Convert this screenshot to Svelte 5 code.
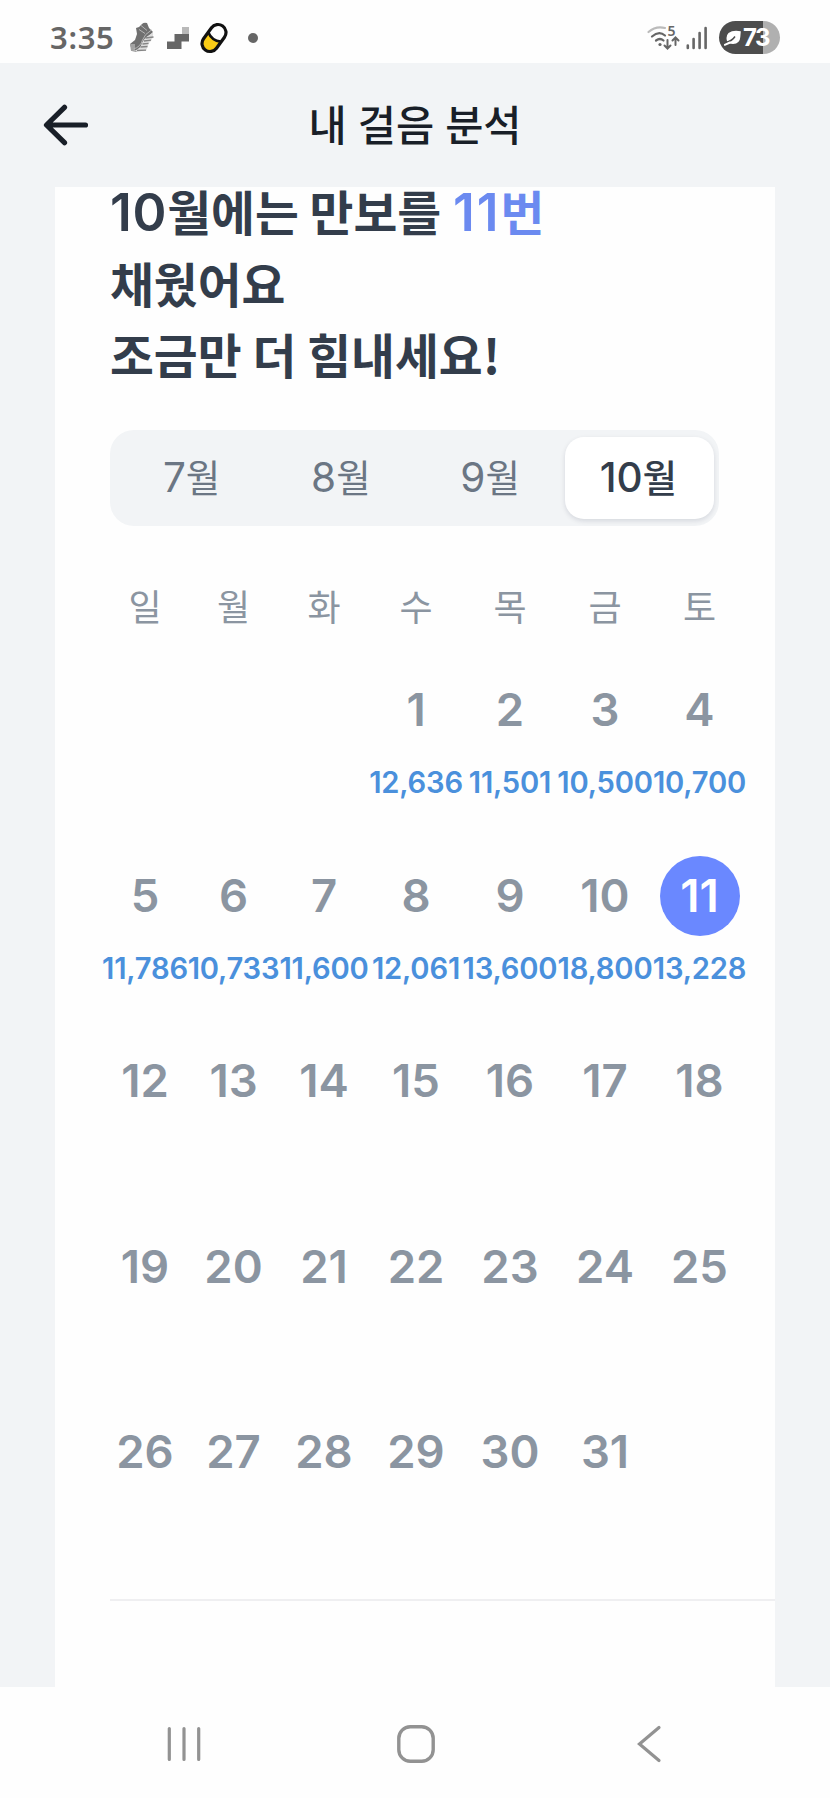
<script>
	const months = [7, 8, 9, 10];
	const weekdays = ['일', '월', '화', '수', '목', '금', '토'];
	const today = 11;
	const startOffset = 3; // 1일은 수요일

	const steps = {
		1: 12636, 2: 11501, 3: 10500, 4: 10700,
		5: 11786, 6: 10733, 7: 11600, 8: 12061, 9: 13600, 10: 18800, 11: 13228
	};

	const cells = [
		...Array(startOffset).fill(null),
		...Array.from({ length: 31 }, (_, i) => i + 1)
	];

	let selected = $state(10);
</script>

<div class="screen">
	<div class="status">
		<div class="status-left">
			<span class="clock">3:35</span>
			<svg class="shoe" width="24" height="31" viewBox="0 0 24 31" aria-hidden="true">
				<path d="M12 2q2-2 5-1l2 5 4 4-3 3-5 4-4 8-5 5-4-1-2-7 5-4 2-6-1-6 3-1z" fill="#707070" />
				<path d="M0 22h5v7H1z" fill="#a2a2a2" />
				<path d="M23 10.500q1 6-4 10.500l-3 8-14 .500q7-2 9-6 2-6 6-9z" fill="#dedede" />
				<path d="M15.500 16l8-1M14 19l7-.800M12.500 22l6-.600M10.500 25l7-.500M7 28.500l9-.300" stroke="#858585" stroke-width="1.300" />
				<path d="M21.500 8q-7 4-9 10-2 7-9 9M11 3.500l6 5M9 7.500l6 4" fill="none" stroke="#b5b5b5" stroke-width="1" />
			</svg>
			<svg class="stairs" width="22" height="22" viewBox="0 0 22 22" aria-hidden="true">
				<path d="M15 0h7v7h-7z" fill="#b9b9b9" />
				<path d="M7.500 7H22v7.500h-7.500V22H0v-7.500h7.500z" fill="#666" />
			</svg>
			<svg class="pill" width="28" height="32" viewBox="0 0 28 32" aria-hidden="true">
				<g transform="rotate(36 14 16)">
					<path d="M6.500 15q7.500 4.500 15 0v7a7.500 7.500 0 0 1-15 0z" fill="#facc15" />
					<rect x="6" y="1.200" width="16" height="29.600" rx="8" fill="none" stroke="#111" stroke-width="3.200" />
					<path d="M6.500 15q7.500 4.500 15 0" fill="none" stroke="#111" stroke-width="2.600" />
				</g>
			</svg>
			<span class="dot"></span>
		</div>
		<div class="status-right">
			<svg class="wifi" width="33" height="26" viewBox="0 0 33 26" fill="none" stroke-linecap="round" aria-hidden="true">
				<path d="M1.500 7Q9 .500 18 3" stroke="#bbb" stroke-width="2.200" />
				<path d="M5 11.500Q12 5.500 18 10.500" stroke="#666" stroke-width="2.200" />
				<path d="M9 15.500Q13 12.500 16.500 15.500" stroke="#666" stroke-width="2.200" />
				<circle cx="13" cy="19.500" r="1.600" fill="#666" />
				<path d="M20.500 15v8M17.500 20.500l3 3 3-3M28.500 20v-7M25.500 15.500l3-3 3 3" stroke="#666" stroke-width="2" />
				<text x="20.500" y="11" class="band">5</text>
			</svg>
			<svg class="signal" width="22" height="24" viewBox="0 0 22 24" aria-hidden="true">
				<path d="M1.800 19.500v2.500M7.600 13v9M13.600 7v15M19.600 2v20" stroke="#666" stroke-width="2.600" stroke-linecap="round" />
			</svg>
			<div class="battery">
				<svg width="18" height="16" viewBox="0 0 18 16" aria-hidden="true">
					<path d="M16.800 1.200Q9-.500 4.500 3 1.500 6 3 11q1.500 3 6 3 7-.500 7.300-7z" fill="#fff" />
					<path d="M2 12.500Q8 11 11 6.500" fill="none" stroke="#4d4d4d" stroke-width="1.500" />
					<path d="M.800 14.800L6 12.500" stroke="#fff" stroke-width="2" stroke-linecap="round" />
				</svg>
				<span>73</span>
			</div>
		</div>
	</div>

	<header class="topbar">
		<button class="back" aria-label="뒤로">
			<svg width="46" height="42" viewBox="0 0 46 42" fill="none" stroke="#191f28" stroke-width="5.200" stroke-linecap="round" stroke-linejoin="round">
				<path d="M21.500 3.300L3.500 21l18 17.700M4 21h38.500" />
			</svg>
		</button>
		<h1>내 걸음 분석</h1>
	</header>

	<main class="card">
		<h2>
			<span class="num">10</span>월에는 만보를 <em><span class="num">11</span>번</em><br />
			채웠어요<br />
			조금만 더 힘내세요!
		</h2>

		<div class="tabs">
			{#each months as month}
				<button class:active={selected === month} onclick={() => (selected = month)}>
					<span class="num">{month}</span>월
				</button>
			{/each}
		</div>

		<div class="grid weekdays">
			{#each weekdays as day}
				<div>{day}</div>
			{/each}
		</div>

		<div class="grid days">
			{#each cells as day}
				<div class="cell">
					{#if day}
						<span class="day" class:today={day === today}>{day}</span>
						{#if steps[day]}
							<span class="steps">{steps[day].toLocaleString('en-US')}</span>
						{/if}
					{/if}
				</div>
			{/each}
		</div>

		<hr />
	</main>

	<nav class="navbar">
		<svg width="34" height="38" viewBox="0 0 34 38" aria-hidden="true">
			<path d="M2.300 3.500v31M17 3.500v31M31.700 3.500v31" stroke="#929292" stroke-width="3.200" stroke-linecap="round" />
		</svg>
		<svg class="home" width="38" height="38" viewBox="0 0 38 38" aria-hidden="true">
			<rect x="1.800" y="1.800" width="34.400" height="34.400" rx="11.500" fill="none" stroke="#929292" stroke-width="3.400" />
		</svg>
		<svg width="34" height="38" viewBox="0 0 34 38" aria-hidden="true">
			<path d="M22 2.500L2.500 19 22 35.500" fill="none" stroke="#929292" stroke-width="3.200" stroke-linecap="round" />
		</svg>
	</nav>
</div>

<style>
	:global(body) {
		margin: 0;
		background: #fefefe;
	}

	.screen {
		width: 830px;
		height: 1798px;
		display: flex;
		flex-direction: column;
		background: #f2f4f6;
		font-family: Inter, "Noto Sans CJK KR", sans-serif;
	}

	button {
		border: none;
		background: none;
		padding: 0;
		font: inherit;
		color: inherit;
		cursor: pointer;
	}

	svg {
		display: block;
		flex: none;
	}

	/* 상태바 */
	.status {
		flex: none;
		height: 63px;
		box-sizing: border-box;
		padding: 0 50px 0 50px;
		display: flex;
		justify-content: space-between;
		background: #fefefe;
	}
	.status-left,
	.status-right {
		display: flex;
		align-items: center;
		height: 75px;
	}
	.clock {
		width: 65px;
		font: 600 31px/1 "Noto Sans", sans-serif;
		letter-spacing: 0.7px;
		color: #666;
	}
	.shoe { margin-left: 15px; }
	.stairs { margin-left: 13px; }
	.pill { margin-left: 11px; }
	.dot {
		width: 10px;
		height: 10px;
		margin-left: 20px;
		border-radius: 50%;
		background: #666;
	}
	.wifi { overflow: visible; }
	.band {
		font: 600 14px "Noto Sans", sans-serif;
		fill: #666;
	}
	.signal { margin-left: 6px; }
	.battery {
		display: flex;
		align-items: center;
		gap: 1px;
		width: 61px;
		height: 33px;
		margin-left: 11px;
		box-sizing: border-box;
		padding-left: 5px;
		border-radius: 17px;
		background: linear-gradient(90deg, #4d4d4d 44px, #b0b0b0 44px);
		color: #fff;
		font: 700 24px/33px Inter, sans-serif;
		letter-spacing: -1.5px;
	}

	/* 헤더 */
	.topbar {
		flex: none;
		height: 124px;
		display: grid;
		grid-template-columns: 100px 1fr 100px;
		align-items: center;
	}
	.back { margin-left: 43px; }
	h1 {
		margin: 0;
		padding-top: 1px;
		text-align: center;
		font-size: 41.5px;
		font-weight: 500;
		line-height: 60px;
		color: #191f28;
	}

	/* 본문 카드 */
	.card {
		display: flow-root;
		flex: none;
		width: 720px;
		height: 1500px;
		margin-left: 55px;
		background: #fefefe;
	}
	h2 {
		margin: -12px 0 0 55px;
		height: 215px;
		font-family: "Noto Sans CJK KR", sans-serif;
		font-size: 47.7px;
		font-weight: 700;
		line-height: 71.5px;
		color: #333d4b;
		white-space: nowrap;
	}
	.num {
		font-family: Inter, sans-serif;
		font-size: 1.08em;
		font-weight: 600;
		line-height: 1;
	}
	h2 .num { letter-spacing: 0.7px; }
	em {
		margin-left: 1px;
		font-style: normal;
		color: #6b8af0;
	}
	em .num { letter-spacing: 2px; }

	.tabs {
		display: grid;
		grid-template-columns: repeat(4, 1fr);
		width: 609px;
		height: 96px;
		box-sizing: border-box;
		margin: 40px 0 0 55px;
		padding: 7px 5px 7px 7px;
		border-radius: 24px;
		background: #f2f4f6;
	}
	.tabs button {
		padding-bottom: 4px;
		border-radius: 19px;
		font-family: "Noto Sans CJK KR", sans-serif;
		font-size: 37.5px;
		font-weight: 400;
		line-height: 56px;
		color: #6b7684;
	}
	.tabs .num { font-weight: 400; }
	.tabs .active {
		padding-right: 2px;
		background: #fff;
		box-shadow: 0 2px 5px rgba(0, 20, 50, 0.12);
		color: #333d4b;
		font-weight: 500;
	}
	.tabs .active .num { font-weight: 500; }

	.grid {
		display: grid;
		grid-template-columns: 88px 89px 92px 92px 96px 94px 95px;
		margin-left: 46px;
		text-align: center;
	}
	.weekdays {
		margin-top: 57px;
		height: 50px;
		font-size: 36px;
		line-height: 50px;
		color: #8b95a1;
	}
	.days {
		margin-top: 37px;
		grid-auto-rows: 185.6px;
	}
	.cell {
		display: flex;
		flex-direction: column;
		align-items: center;
	}
	.day {
		width: 80px;
		height: 80px;
		border-radius: 50%;
		font-size: 45.5px;
		font-weight: 600;
		line-height: 79px;
		color: #8b95a1;
	}
	.today {
		background: #6a88ff;
		color: #fff;
	}
	.steps {
		margin-top: 13px;
		font-size: 29.2px;
		font-weight: 600;
		line-height: 40px;
		letter-spacing: -0.2px;
		color: #4a90dc;
		white-space: nowrap;
	}

	hr {
		height: 2px;
		margin: 1px 0 0 55px;
		border: none;
		background: #efeff1;
	}

	/* 하단 내비게이션 */
	.navbar {
		flex: 1;
		display: flex;
		align-items: center;
		justify-content: space-between;
		padding: 2px 159px 0 167px;
		background: #fefefe;
	}
	.home { margin-right: 6px; }
</style>
